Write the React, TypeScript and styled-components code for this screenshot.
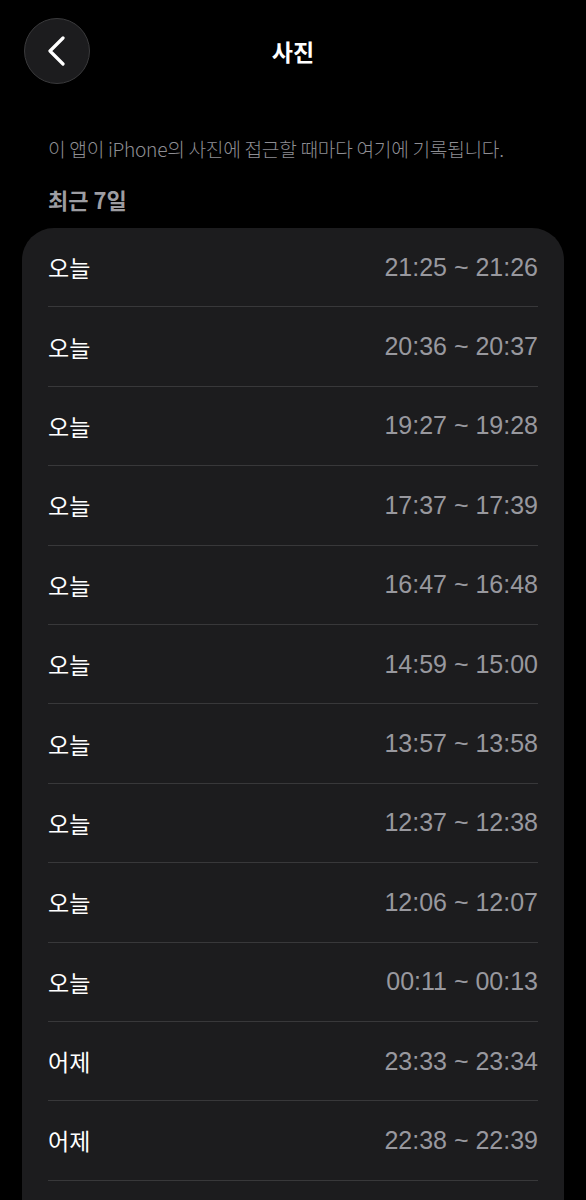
import { createGlobalStyle, styled } from "styled-components";

const GlobalStyle = createGlobalStyle`
	html, body {
		margin: 0;
		padding: 0;
		background: #000;
	}
	body {
		font-family: "Liberation Sans", "Noto Sans CJK KR", sans-serif;
		-webkit-font-smoothing: antialiased;
	}
`;

type AccessLog = {
	day: string;
	range: string;
};

const LOGS: AccessLog[] = [
	{ day: "오늘", range: "21:25 ~ 21:26" },
	{ day: "오늘", range: "20:36 ~ 20:37" },
	{ day: "오늘", range: "19:27 ~ 19:28" },
	{ day: "오늘", range: "17:37 ~ 17:39" },
	{ day: "오늘", range: "16:47 ~ 16:48" },
	{ day: "오늘", range: "14:59 ~ 15:00" },
	{ day: "오늘", range: "13:57 ~ 13:58" },
	{ day: "오늘", range: "12:37 ~ 12:38" },
	{ day: "오늘", range: "12:06 ~ 12:07" },
	{ day: "오늘", range: "00:11 ~ 00:13" },
	{ day: "어제", range: "23:33 ~ 23:34" },
	{ day: "어제", range: "22:38 ~ 22:39" },
];

const Page = styled.div`
	width: 586px;
	height: 1200px;
	overflow: hidden;
	background: #000;
	color: #fff;
`;

const Header = styled.header`
	display: grid;
	grid-template-columns: 1fr auto 1fr;
	align-items: center;
	padding: 18px 24px 0;
	height: 66px;
	box-sizing: content-box;
`;

const BackButton = styled.button`
	width: 66px;
	height: 66px;
	border-radius: 50%;
	background: #1c1c1e;
	border: 1px solid #3a3a3c;
	display: flex;
	align-items: center;
	justify-content: center;
	padding: 0;
	cursor: pointer;
	justify-self: start;
`;

const Title = styled.h1`
	margin: 0;
	font-family: "Noto Sans CJK KR", sans-serif;
	font-size: 23px;
	line-height: 32px;
	font-weight: 700;
	color: #fff;
`;

const Body = styled.main`
	padding: 0 22px;
`;

const Description = styled.p`
	margin: 53px 0 0;
	padding-left: 26px;
	font-family: "Noto Sans CJK KR", sans-serif;
	font-size: 19.2px;
	font-weight: 300;
	line-height: 24px;
	color: #8e8e93;
	letter-spacing: -0.3px;
	white-space: nowrap;
`;

const SectionTitle = styled.h2`
	margin: 22px 0 0;
	padding-left: 26px;
	font-family: "Noto Sans CJK KR", sans-serif;
	font-size: 22px;
	line-height: 32px;
	font-weight: 700;
	color: #9d9da2;
`;

const Card = styled.section`
	margin-top: 13px;
	background: #1c1c1e;
	border-radius: 32px;
	padding: 0 26px 60px;
`;

const Row = styled.div`
	display: flex;
	justify-content: space-between;
	align-items: center;
	height: 78.4px;
	border-bottom: 1px solid #38383a;
`;

const DayLabel = styled.span`
	font-family: "Noto Sans CJK KR", sans-serif;
	font-size: 23px;
	color: #fff;
`;

const TimeRange = styled.span`
	font-family: "Liberation Sans", sans-serif;
	font-size: 25px;
	color: #98989e;
`;

const ChevronLeft = () => (
	<svg width="20" height="30" viewBox="0 0 20 30" fill="none">
		<path
			d="M16 2 L3 15 L16 28"
			stroke="#fff"
			strokeWidth="3.2"
			strokeLinecap="round"
			strokeLinejoin="round"
		/>
	</svg>
);

const App = () => {
	return (
		<Page>
			<GlobalStyle />
			<Header>
				<BackButton aria-label="뒤로">
					<ChevronLeft />
				</BackButton>
				<Title>사진</Title>
				<div />
			</Header>
			<Body>
				<Description>
					이 앱이 iPhone의 사진에 접근할 때마다 여기에 기록됩니다.
				</Description>
				<SectionTitle>최근 7일</SectionTitle>
				<Card>
					{LOGS.map((log, i) => (
						<Row key={i}>
							<DayLabel>{log.day}</DayLabel>
							<TimeRange>{log.range}</TimeRange>
						</Row>
					))}
				</Card>
			</Body>
		</Page>
	);
};

export default App;
